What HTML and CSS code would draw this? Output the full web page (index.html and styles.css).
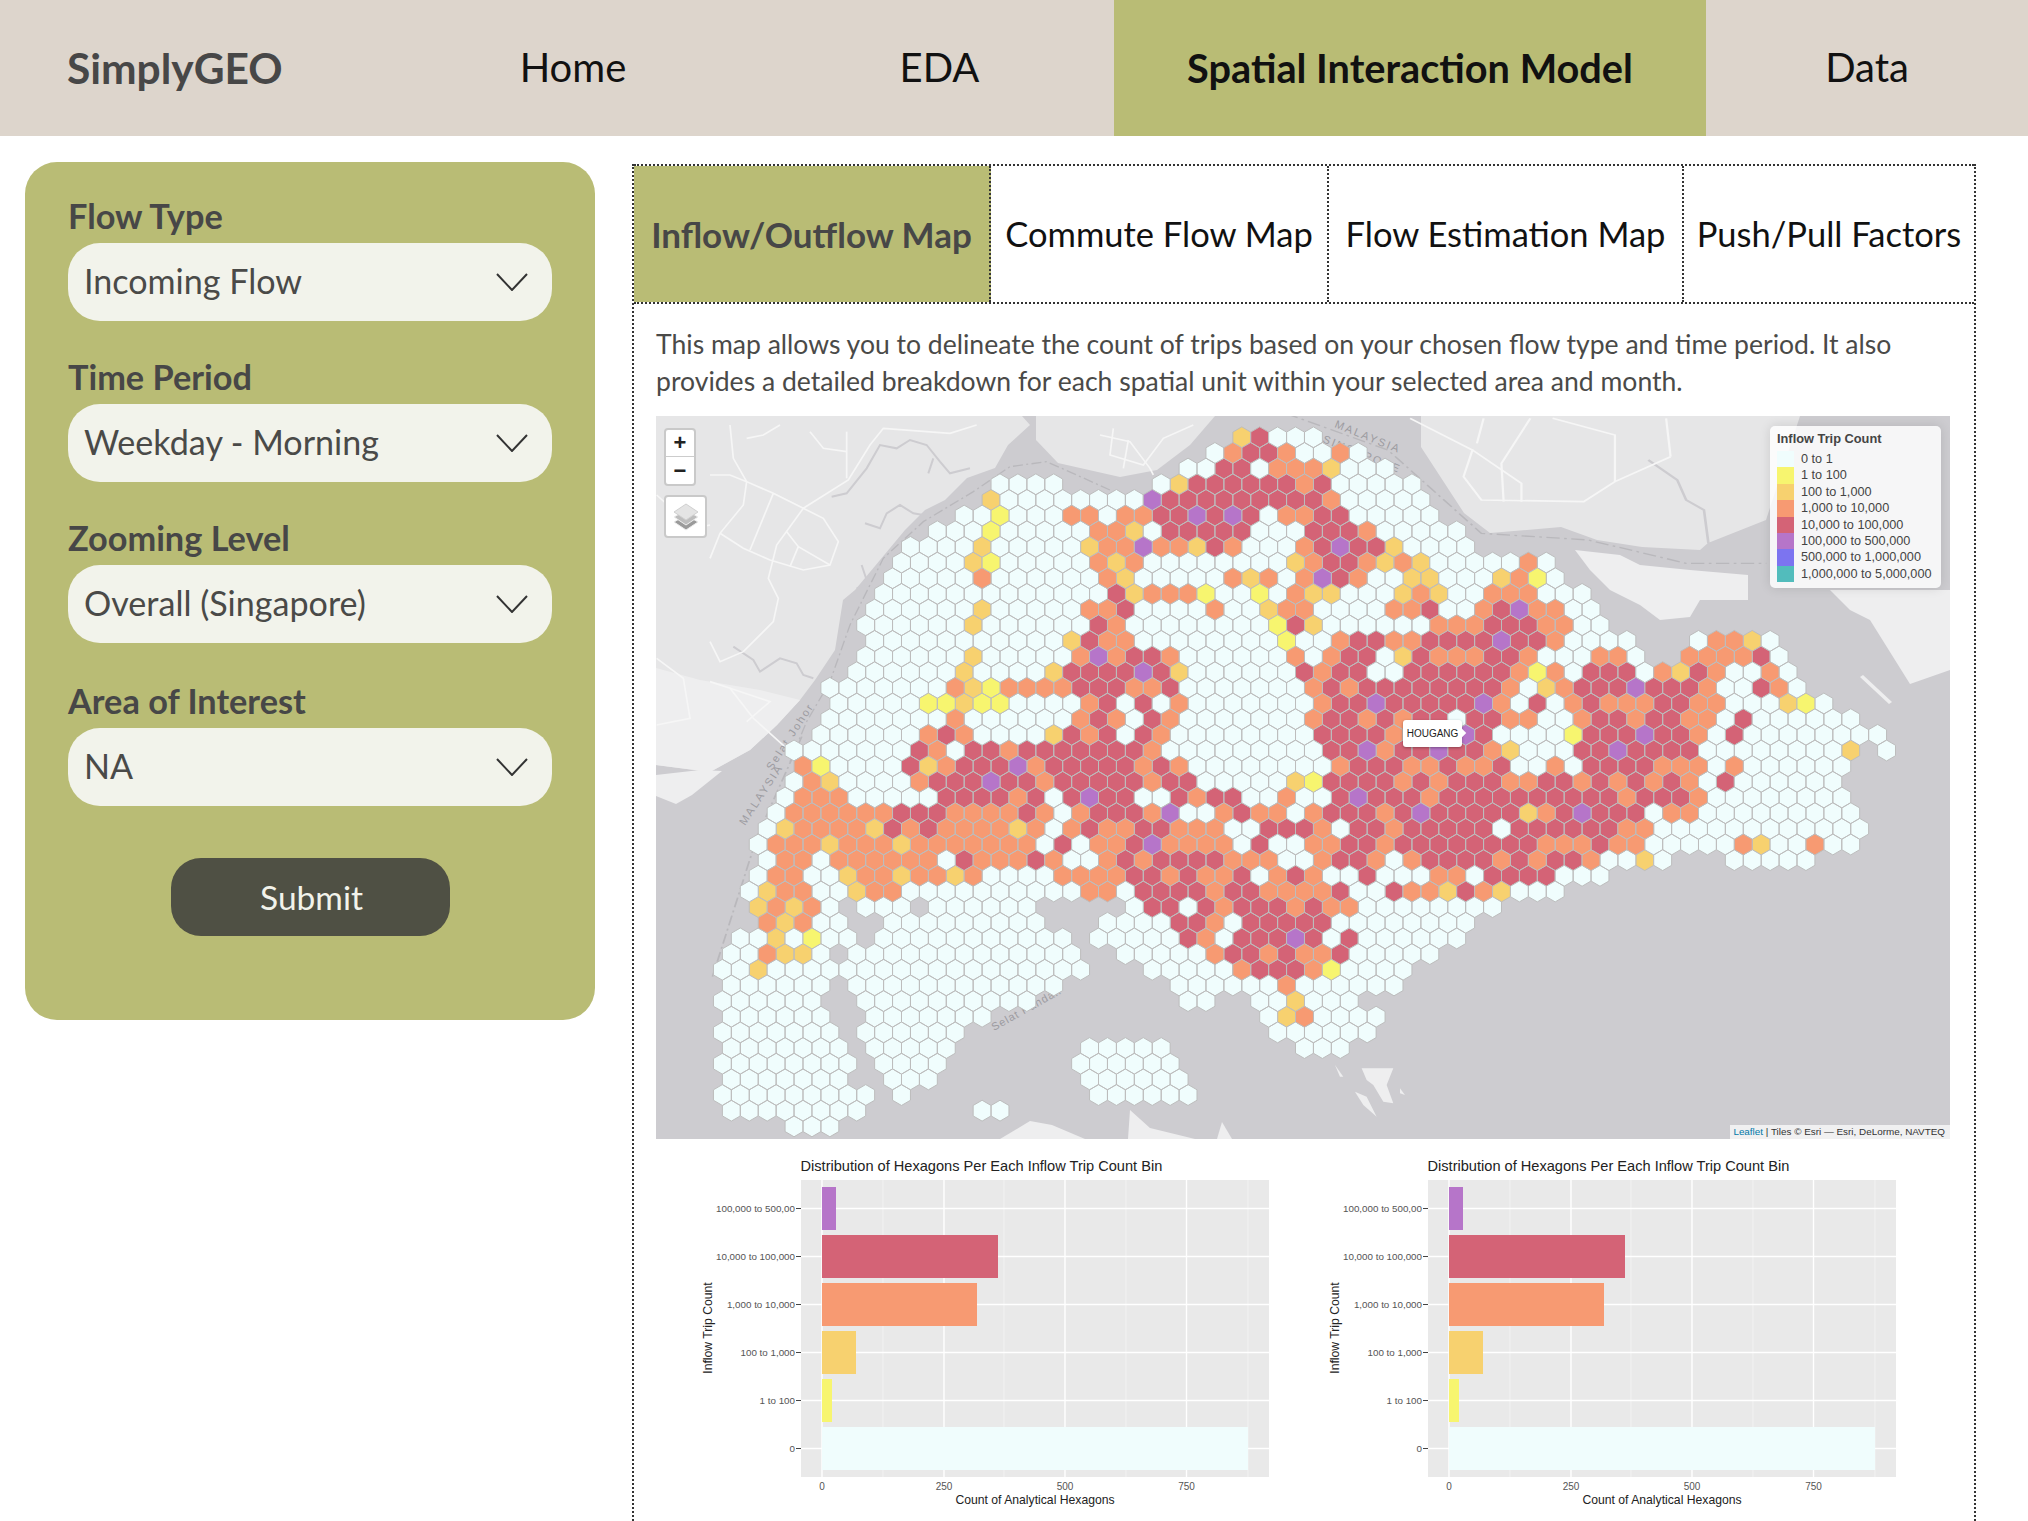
FILE: index.html
```html
<!DOCTYPE html>
<html lang="en">
<head>
<meta charset="utf-8">
<title>SimplyGEO</title>
<link rel="stylesheet" href="styles.css">
</head>
<body>
<div class="page">
  <nav class="nav">
    <div class="brand">SimplyGEO</div>
    <div class="nav-item nav-home">Home</div>
    <div class="nav-item nav-eda">EDA</div>
    <div class="nav-item nav-active">Spatial Interaction Model</div>
    <div class="nav-item nav-data">Data</div>
  </nav>
  <main class="main">
    <aside class="sidebar">
      <div class="field"><div class="field-label">Flow Type</div><div class="select"><span>Incoming Flow</span><svg class="chev" viewBox="0 0 32 18"><polyline points="1,1 16,17 31,1"/></svg></div></div>
      <div class="field"><div class="field-label">Time Period</div><div class="select"><span>Weekday - Morning</span><svg class="chev" viewBox="0 0 32 18"><polyline points="1,1 16,17 31,1"/></svg></div></div>
      <div class="field field-wide"><div class="field-label">Zooming Level</div><div class="select"><span>Overall (Singapore)</span><svg class="chev" viewBox="0 0 32 18"><polyline points="1,1 16,17 31,1"/></svg></div></div>
      <div class="field"><div class="field-label">Area of Interest</div><div class="select"><span>NA</span><svg class="chev" viewBox="0 0 32 18"><polyline points="1,1 16,17 31,1"/></svg></div></div>
      <button class="submit" type="button">Submit</button>
    </aside>
    <section class="panel">
      <div class="tabs">
        <div class="tab tab-1 tab-active">Inflow/Outflow Map</div>
        <div class="tab tab-2">Commute Flow Map</div>
        <div class="tab tab-3">Flow Estimation Map</div>
        <div class="tab tab-4">Push/Pull Factors</div>
      </div>
      <p class="intro">This map allows you to delineate the count of trips based on your chosen flow type and time period. It also provides a detailed breakdown for each spatial unit within your selected area and month.</p>
      <div class="map">
        <svg class="map-svg" id="mapSvg" viewBox="656 416 1294 723" xmlns="http://www.w3.org/2000/svg">
          <rect class="water" x="656" y="416" width="1294" height="723"/>
          <g class="land">
            <polygon points="656,416 1022,416 1030,425 1008,445 995,468 967,478 945,500 925,510 905,530 880,560 855,590 843,600 835,650 815,680 800,700 777,725 750,750 710,772 656,765"/>
            <polygon points="1036,416 1036,440 1058,463 1120,477 1157,470 1190,445 1215,416"/>
            <polygon points="1421,416 1421,447 1464,513 1490,533 1561,527 1597,540 1642,547 1700,550 1708,543 1766,520 1800,416"/>
          </g>
          <g class="land-pale">
            <polygon points="656,668 700,680 760,690 800,700 777,725 750,750 710,772 656,765"/>
            <polygon points="656,775 700,770 722,771 692,795 676,804 656,796"/>
            <polygon points="1575,550 1620,555 1640,565 1690,570 1748,575 1748,600 1700,600 1690,617 1660,620 1640,605 1610,590 1590,570"/>
            <polygon points="1830,590 1950,590 1950,670 1910,684 1895,660 1870,620 1850,610"/>
            <polygon points="1860,677 1863,675 1892,702 1889,704"/>
            <polygon points="1000,1139 1030,1121 1052,1125 1085,1139"/>
            <polygon points="1128,1139 1130,1110 1150,1128 1195,1139"/>
            <polygon points="1217,1139 1222,1122 1232,1139"/>
            <g transform="translate(1100 775) scale(.3333)">
              <polygon points="785,880 880,880 860,930 880,985 850,980 820,930 800,915"/>
              <polygon points="765,950 800,965 830,1025 790,990"/>
              <polygon points="705,870 730,905 720,905"/>
              <polygon points="900,940 915,960 900,955"/>
            </g>
          </g>
          <g class="rivers" transform="translate(710 425) scale(.3333)">
            <polyline points="365,215 410,205 470,130 510,60 560,70 600,45 650,60 690,110 720,145 780,130"/>
            <polyline points="465,295 510,310 530,265 570,240 610,265 640,270"/>
            <polyline points="70,665 130,705 150,740 210,700 260,715 280,750 310,760"/>
            <polyline points="670,100 655,145"/>
            <polyline points="440,490 475,480 455,420"/>
          </g>
          <g class="rivers" transform="translate(1330 400) scale(.4452 .3333)">
            <polyline points="715,180 780,240 800,300 840,330 850,430"/>
          </g>
          <g class="boundary">
            <polyline transform="translate(710 425) scale(.3333)" points="1200,195 1100,150 1010,110 900,125 790,200 640,290 520,400 420,600 360,770 290,890 240,1010"/>
            <polyline transform="translate(650 640) scale(.4464 .3333)" points="340,290 240,590 140,1010"/>
            <polyline transform="translate(1330 400) scale(.4452 .3333)" points="-100,40 130,150 340,400 580,420 800,490 980,490"/>
          </g>
          <g class="roads">
            <polyline transform="translate(710 425) scale(.3333)" points="60,0 70,100 110,170 190,205 280,250 415,165 480,60 520,10 720,25 800,0"/>
            <polyline transform="translate(710 425) scale(.3333)" points="110,170 100,240 30,325 0,400"/>
            <polyline transform="translate(710 425) scale(.3333)" points="30,325 100,370 180,405 280,435 360,420 385,350 340,280 280,250 200,360 175,460 205,520 190,590 100,680 30,710 0,650"/>
            <polyline transform="translate(710 425) scale(.3333)" points="190,205 120,375"/>
            <polyline transform="translate(710 425) scale(.3333)" points="230,320 265,365 360,420"/>
            <polyline transform="translate(710 425) scale(.3333)" points="265,365 240,425"/>
            <polyline transform="translate(710 425) scale(.3333)" points="0,770 60,790 130,880 230,970"/>
            <polyline transform="translate(710 425) scale(.3333)" points="60,790 180,830 110,890"/>
            <polyline transform="translate(710 425) scale(.3333)" points="410,20 410,160"/>
            <polyline transform="translate(710 425) scale(.3333)" points="0,150 60,150 110,170"/>
            <polyline transform="translate(710 425) scale(.3333)" points="110,40 160,30 210,0"/>
            <polyline transform="translate(710 425) scale(.3333)" points="300,20 340,70 410,80"/>
            <polyline transform="translate(710 425) scale(.3333)" points="-160,210 -50,310 0,300"/>
            <polyline transform="translate(710 425) scale(.3333)" points="-160,700 -80,760 -60,880 -160,900"/>
            <polyline transform="translate(1330 400) scale(.4452 .3333)" points="180,55 320,150 300,230 340,300 570,305 640,245 765,170"/>
            <polyline transform="translate(1330 400) scale(.4452 .3333)" points="345,55 330,130"/>
            <polyline transform="translate(1330 400) scale(.4452 .3333)" points="450,55 385,190 390,305"/>
            <polyline transform="translate(1330 400) scale(.4452 .3333)" points="320,150 430,250 430,305"/>
            <polyline transform="translate(1330 400) scale(.4452 .3333)" points="500,55 640,105 640,245"/>
            <polyline transform="translate(1330 400) scale(.4452 .3333)" points="755,55 765,170"/>
            <polyline transform="translate(1100 425) scale(.3333)" points="0,30 90,50 150,130 160,150"/>
            <polyline transform="translate(1100 425) scale(.3333)" points="40,10 30,90 130,120 190,40 280,0"/>
            <polyline transform="translate(1100 425) scale(.3333)" points="85,45 70,130"/>
          </g>
          <text class="geo-label" transform="translate(1334 427) rotate(22)">MALAYSIA</text>
          <text class="geo-label" transform="translate(1322 442) rotate(22)">SINGAPORE</text>
          <text class="geo-label" transform="translate(745 826) rotate(-57)">MALAYSIA</text>
          <text class="geo-label" transform="translate(772 771) rotate(-57)">Selat Johor</text>
          <text class="geo-label geo-plain" transform="translate(994 1031) rotate(-29)">Selat Pandan</text>
          <g id="hexes"></g>
        </svg>
        <div class="zoom-ctl"><div class="zoom-btn zoom-in">+</div><div class="zoom-btn">−</div></div>
        <div class="layers-ctl">
          <svg viewBox="0 0 26 28" class="layers-icon">
            <polygon class="l3" points="13,12 25,19 13,27 1,19"/>
            <polygon class="l2" points="13,7 25,14 13,22 1,14"/>
            <polygon class="l1" points="13,1 25,9 13,17 1,9"/>
          </svg>
        </div>
        <div class="legend">
          <div class="legend-title">Inflow Trip Count</div>
          <div class="legend-row"><i class="sw sw-w"></i>0 to 1</div>
          <div class="legend-row"><i class="sw sw-y"></i>1 to 100</div>
          <div class="legend-row"><i class="sw sw-o"></i>100 to 1,000</div>
          <div class="legend-row"><i class="sw sw-r"></i>1,000 to 10,000</div>
          <div class="legend-row"><i class="sw sw-m"></i>10,000 to 100,000</div>
          <div class="legend-row"><i class="sw sw-p"></i>100,000 to 500,000</div>
          <div class="legend-row"><i class="sw sw-b"></i>500,000 to 1,000,000</div>
          <div class="legend-row"><i class="sw sw-t"></i>1,000,000 to 5,000,000</div>
        </div>
        <div class="tooltip">HOUGANG</div>
        <div class="attrib"><span class="attrib-link">Leaflet</span> | Tiles © Esri — Esri, DeLorme, NAVTEQ</div>
      </div>
      <div class="charts">
        <svg class="chart" viewBox="680 1139 627 382" xmlns="http://www.w3.org/2000/svg">
          <text class="c-title" x="800.5" y="1171">Distribution of Hexagons Per Each Inflow Trip Count Bin</text>
          <rect class="c-bg" x="801" y="1180" width="468" height="297"/>
          <g class="c-minor"><line x1="883" x2="883" y1="1180" y2="1477"/><line x1="1004" x2="1004" y1="1180" y2="1477"/><line x1="1126" x2="1126" y1="1180" y2="1477"/><line x1="1248" x2="1248" y1="1180" y2="1477"/></g>
          <g class="c-major"><line x1="822" x2="822" y1="1180" y2="1477"/><line x1="944" x2="944" y1="1180" y2="1477"/><line x1="1065" x2="1065" y1="1180" y2="1477"/><line x1="1186.5" x2="1186.5" y1="1180" y2="1477"/><line x1="801" x2="1269" y1="1208.5" y2="1208.5"/><line x1="801" x2="1269" y1="1256.5" y2="1256.5"/><line x1="801" x2="1269" y1="1304.5" y2="1304.5"/><line x1="801" x2="1269" y1="1352.5" y2="1352.5"/><line x1="801" x2="1269" y1="1400.5" y2="1400.5"/><line x1="801" x2="1269" y1="1448.5" y2="1448.5"/></g>
          <rect class="hex-p" x="822" y="1187" width="14" height="43"/>
          <rect class="hex-m" x="822" y="1235" width="176" height="43"/>
          <rect class="hex-r" x="822" y="1283" width="155" height="43"/>
          <rect class="hex-o" x="822" y="1331" width="34" height="43"/>
          <rect class="hex-y" x="822" y="1379" width="10" height="43"/>
          <rect class="hex-w" x="822" y="1427" width="426" height="43"/>
          <g class="c-ticks"><line x1="796" x2="801" y1="1208.5" y2="1208.5"/><line x1="796" x2="801" y1="1256.5" y2="1256.5"/><line x1="796" x2="801" y1="1304.5" y2="1304.5"/><line x1="796" x2="801" y1="1352.5" y2="1352.5"/><line x1="796" x2="801" y1="1400.5" y2="1400.5"/><line x1="796" x2="801" y1="1448.5" y2="1448.5"/></g>
          <g class="c-ylabels"><text x="795" y="1212">100,000 to 500,00</text><text x="795" y="1260">10,000 to 100,000</text><text x="795" y="1308">1,000 to 10,000</text><text x="795" y="1356">100 to 1,000</text><text x="795" y="1404">1 to 100</text><text x="795" y="1452">0</text></g>
          <g class="c-xlabels"><text x="822" y="1490">0</text><text x="944" y="1490">250</text><text x="1065" y="1490">500</text><text x="1186.5" y="1490">750</text></g>
          <text class="c-axis" transform="translate(712 1328) rotate(-90)">Inflow Trip Count</text>
          <text class="c-axis" x="1035" y="1504">Count of Analytical Hexagons</text>
        </svg>
        <svg class="chart" viewBox="680 1139 627 382" xmlns="http://www.w3.org/2000/svg">
          <text class="c-title" x="800.5" y="1171">Distribution of Hexagons Per Each Inflow Trip Count Bin</text>
          <rect class="c-bg" x="801" y="1180" width="468" height="297"/>
          <g class="c-minor"><line x1="883" x2="883" y1="1180" y2="1477"/><line x1="1004" x2="1004" y1="1180" y2="1477"/><line x1="1126" x2="1126" y1="1180" y2="1477"/><line x1="1248" x2="1248" y1="1180" y2="1477"/></g>
          <g class="c-major"><line x1="822" x2="822" y1="1180" y2="1477"/><line x1="944" x2="944" y1="1180" y2="1477"/><line x1="1065" x2="1065" y1="1180" y2="1477"/><line x1="1186.5" x2="1186.5" y1="1180" y2="1477"/><line x1="801" x2="1269" y1="1208.5" y2="1208.5"/><line x1="801" x2="1269" y1="1256.5" y2="1256.5"/><line x1="801" x2="1269" y1="1304.5" y2="1304.5"/><line x1="801" x2="1269" y1="1352.5" y2="1352.5"/><line x1="801" x2="1269" y1="1400.5" y2="1400.5"/><line x1="801" x2="1269" y1="1448.5" y2="1448.5"/></g>
          <rect class="hex-p" x="822" y="1187" width="14" height="43"/>
          <rect class="hex-m" x="822" y="1235" width="176" height="43"/>
          <rect class="hex-r" x="822" y="1283" width="155" height="43"/>
          <rect class="hex-o" x="822" y="1331" width="34" height="43"/>
          <rect class="hex-y" x="822" y="1379" width="10" height="43"/>
          <rect class="hex-w" x="822" y="1427" width="426" height="43"/>
          <g class="c-ticks"><line x1="796" x2="801" y1="1208.5" y2="1208.5"/><line x1="796" x2="801" y1="1256.5" y2="1256.5"/><line x1="796" x2="801" y1="1304.5" y2="1304.5"/><line x1="796" x2="801" y1="1352.5" y2="1352.5"/><line x1="796" x2="801" y1="1400.5" y2="1400.5"/><line x1="796" x2="801" y1="1448.5" y2="1448.5"/></g>
          <g class="c-ylabels"><text x="795" y="1212">100,000 to 500,00</text><text x="795" y="1260">10,000 to 100,000</text><text x="795" y="1308">1,000 to 10,000</text><text x="795" y="1356">100 to 1,000</text><text x="795" y="1404">1 to 100</text><text x="795" y="1452">0</text></g>
          <g class="c-xlabels"><text x="822" y="1490">0</text><text x="944" y="1490">250</text><text x="1065" y="1490">500</text><text x="1186.5" y="1490">750</text></g>
          <text class="c-axis" transform="translate(712 1328) rotate(-90)">Inflow Trip Count</text>
          <text class="c-axis" x="1035" y="1504">Count of Analytical Hexagons</text>
        </svg>
      </div>
    </section>
  </main>
</div>
<script src="map.js"></script>
</body>
</html>
```
FILE: styles.css
```css
* { box-sizing: border-box; }
html, body { margin: 0; padding: 0; background: #fff; }
body { font-family: Lato, "Open Sans", sans-serif; color: #4a4a48; }
.page { width: 2028px; height: 1521px; overflow: hidden; }

.nav { display: flex; height: 136px; background: #ddd5cc; align-items: stretch; font-size: 40px; }
.brand { width: 381px; padding: 0 0 2px 67px; display: flex; align-items: center; font-weight: 700; font-size: 42.5px; color: #474747; }
.nav-item { display: flex; align-items: center; justify-content: center; color: #111; padding-bottom: 2px; }
.nav-home { width: 384px; }
.nav-eda { width: 349px; }
.nav-active { width: 592px; background: #b9bc75; font-weight: 700; font-size: 39.7px; }
.nav-data { width: 322px; }

.main { display: flex; padding: 26px 52px 0 25px; gap: 37px; align-items: flex-start; }
.sidebar { width: 570px; background: #b9bc75; border-radius: 32px; padding: 31px 43px 84px; flex: none; display: flex; flex-direction: column; }
.field { margin-bottom: 33px; }
.field-wide { margin-bottom: 35px; }
.field-label { height: 50px; line-height: 45px; font-size: 34.3px; font-weight: 700; color: #474747; }
.select { height: 78px; border-radius: 32px; background: #f2f3eb; display: flex; align-items: center; justify-content: space-between; padding: 0 24px 4px 16px; font-size: 34.1px; color: #4a4a48; }
.chev { width: 32px; height: 18px; fill: none; stroke: #333; stroke-width: 2; margin-top: 4px; }
.submit { align-self: center; margin-top: 19px; width: 279px; height: 78px; border: 0; border-radius: 30px; background: #4f5044; color: #f2f3eb; font: 400 33.5px Lato, sans-serif; margin-left: 1px; padding: 0 0 0 2px; }

.panel { width: 1344px; height: 1400px; margin-top: 2px; border-left: 2px dotted #333; border-right: 2px dotted #333; flex: none; }
.tabs { display: flex; height: 140px; border-top: 2px dotted #333; border-bottom: 2px dotted #333; }
.tab { display: flex; align-items: center; justify-content: center; font-size: 34.5px; color: #111; border-right: 2px dotted #333; white-space: nowrap; padding-bottom: 1px; }
.tab-1 { width: 357px; }
.tab-2 { width: 338px; }
.tab-3 { width: 355px; }
.tab-4 { flex: 1; border-right: 0; }
.tab-active { background: #b9bc75; color: #474747; font-weight: 700; font-size: 35px; }
.intro { margin: 22px 0 16px 22px; width: 1290px; font-size: 26.55px; line-height: 37px; color: #4a4a48; }

.map { position: relative; width: 1294px; height: 723px; margin-left: 22px; overflow: hidden; }
.map-svg { display: block; width: 1294px; height: 723px; }
.water { fill: #cdccd0; }
.land polygon { fill: #e6e6e7; }
.land-pale polygon { fill: #eeeeef; }
.roads polyline { fill: none; stroke: #f6f6f6; stroke-width: 5; }
.rivers polyline { fill: none; stroke: #cdccd0; stroke-width: 6; }
.boundary polyline { fill: none; stroke: #b9b8bc; stroke-width: 4; stroke-dasharray: 30 10 6 10; }
.hex { stroke: #bdbdbd; stroke-width: 1; }
.hex-w { fill: #f0fdfd; }
.hex-y { fill: #f7f56f; }
.hex-o { fill: #f7d16f; }
.hex-r { fill: #f79a72; }
.hex-m { fill: #d46376; }
.hex-p { fill: #b675c9; }
.geo-label { font: 11px "Liberation Sans", sans-serif; fill: #9c9ba0; letter-spacing: 2px; }
.geo-plain { letter-spacing: 1px; }

.zoom-ctl { position: absolute; left: 8px; top: 12px; width: 32px; border: 2px solid #c9c9c9; border-radius: 4px; background: #fff; }
.zoom-btn { height: 27px; display: flex; align-items: center; justify-content: center; font: 700 22px "Liberation Sans", sans-serif; color: #222; }
.zoom-in { border-bottom: 1px solid #ccc; }
.layers-ctl { position: absolute; left: 8px; top: 79px; width: 43px; height: 43px; border: 2px solid #c9c9c9; border-radius: 4px; background: #fff; display: flex; align-items: center; justify-content: center; }
.layers-icon { width: 26px; height: 28px; }
.l1 { fill: #e4e4e4; stroke: #d0d0d0; }
.l2 { fill: #bdbdbd; stroke: #eee; }
.l3 { fill: #9a9a9a; stroke: #eee; }

.legend { position: absolute; left: 1114px; top: 10px; width: 171px; height: 162px; padding: 5px 7px; background: rgba(255,255,255,.82); border-radius: 5px; box-shadow: 0 0 12px rgba(0,0,0,.12); font: 12.7px/16.4px "Liberation Sans", sans-serif; color: #444; white-space: nowrap; }
.legend-title { font-weight: 700; font-size: 12.8px; height: 20px; }
.legend-row { display: flex; align-items: center; height: 16.4px; }
.sw { display: block; width: 17px; height: 16.4px; margin-right: 7px; flex: none; }
.sw-w { background: #f0fdfd; }
.sw-y { background: #f7f56f; }
.sw-o { background: #f7d16f; }
.sw-r { background: #f79a72; }
.sw-m { background: #d46376; }
.sw-p { background: #b675c9; }
.sw-b { background: #7c74f0; }
.sw-t { background: #52bcbc; }

.tooltip { position: absolute; left: 747px; top: 304px; width: 59px; height: 27px; background: #fff; border-radius: 3px; box-shadow: 0 1px 3px rgba(0,0,0,.35); font: 10px/27px "Liberation Sans", sans-serif; color: #222; text-align: center; }
.tooltip::after { content: ""; position: absolute; right: -3px; top: 10px; width: 6px; height: 6px; background: #fff; transform: rotate(45deg); }
.attrib { position: absolute; right: 0; bottom: 0; height: 14px; padding: 0 5px 0 3px; background: rgba(255,255,255,.7); font: 9.9px/14px "Liberation Sans", sans-serif; color: #333; white-space: nowrap; }
.attrib-link { color: #0078a8; }

.charts { display: flex; padding-left: 46px; }
.chart { display: block; width: 627px; height: 382px; flex: none; }
.chart text { font-family: "Liberation Sans", sans-serif; }
.c-title { font-size: 14.6px; fill: #222; }
.c-bg { fill: #e9e9e9; }
.c-major line { stroke: #fff; stroke-width: 1.4; }
.c-minor line { stroke: #f4f4f4; stroke-width: .8; }
.c-ticks line { stroke: #444; stroke-width: 1; }
.c-ylabels text { font-size: 9.8px; fill: #555; text-anchor: end; }
.c-xlabels text { font-size: 10px; fill: #555; text-anchor: middle; }
.c-axis { font-size: 12.2px; fill: #222; text-anchor: middle; }
```
FILE: map.js
```js
// Hexagon grid data: each row is [row index, "startColumn:cells", ...]; spaces inside cells are ignored, one letter per hexagon.
var ROWS = [
[0,"29:omwww"],
[1,"27:wrmmrwwrw"],
[2,"26:wwmmwrrrowww"],
[3,"15:wwww","24:womm mmmm r m wwwww"],
[4,"15:o wwwwwwww p mmmmmmmmm r wwwww"],
[5,"13:ww y www rr w rr mm p m p m w rr mm wwwww"],
[6,"12:www y wwwww rr o w mmmmm www mmm r wwwww"],
[7,"10:wwww o wwwww o rr p rr o m r www r m p mm o wwww"],
[8,"10:wwww o y wwwww r o r wwwwwwww o r mm r o r o wwwww r w"],
[9,"9:wwwww r wwwwww r o wwwww r o r w r p m r ww oo www o r y w"],
[10,"9:wwwwwwwwwwwww m o rrr y ww y w r oo www o r o ww rrr www"],
[11,"8:wwwwww o wwwww rr m wwww r ww o rr wwww rr m ww r m p rr ww"],
[12,"8:wwwwww o wwwwww m r wwwwwwww y m o wwwwww rrr mmm rr ww"],
[13,"8:wwwwwwwwwww o m rr wwwwwwww y ww r mm rr mmmm p mm r wwww","54:wrrow"],
[14,"8:wwwwww o wwwww r p r mm r wwwwww r w r mm w o m rrr mm r www rr w","54:rrrrmw"],
[15,"7:wwwwww o wwww o mmmm p m o wwwwww m r mm ww mmmmmm r y r w mmm w r o m r ww r w"],
[16,"6:wwwwwww r o y rrrr mmm rr m wwwwwww r m r mmmmmmmm r w o r mmm p mmm r ww m r w"],
[17,"6:wwwww yy o yy wwww r m w m w r wwwwwww r mm p mmmmm p r w m w r m rrr mm rr www o y w"],
[18,"6:wwwwwww r wwwwww r m r w m r wwwwwww r mm r m r mm w mm rr ww r mm r mm rr w m wwwwww"],
[19,"5:wwwwww r m r wwww o m r m w m r wwwwwwww mmmm rr mm p m wwww y mmm p mm r w m wwwwwwww"],
[20,"4:wwwwwww m r w mm r mmmmmmm r wwwwwwwww mm p r mm p mm r o www mm p mmmm wwwwwwww o","65:w"],
[21,"4:r y wwww m o r mmm p r mmmmm r m r wwwwwwww r mmm rr m rr m ww r w mmmm rrr w r wwwwww"],
[22,"4:w r o wwww r mmm p mm r mmmmm r mm wwwww o y mmmm r m r mmm rr mm r m r m r m r w m wwwwww"],
[23,"3:w rrr wwwww mmmm r m w m p mm ww m r mm ww r ww m p mmm r mmmmmmmmmm r mmm r wwwwwwww"],
[24,"3:w rrrrrr mmm rrrr m r w r mmm r p ww r m rr w r mmm r m p mmmmm o r m p mmm w rr wwwwwwwww"],
[25,"2:w o rrrr o m r m rrrr o r w r m rr mm rrr ww mmm r w mm r mmmmm w mmmmmm rr wwwwwwwwwwww"],
[26,"2:w rrr o rrr o rrrrrrr w m w rr m p rrrr w m ww rr mm r mmmmmmmm rrr m rr wwwww r o ww r ww"],
[27,"2:w rr w rrrrrr w m rrr m r ww r m r mmmm rrr ww r mm r w r mmmm r m r mm r ww o w","56:wwwww"],
[28,"2:w rr ww o rr o rr o r wwww rrrr mm r m rr m w r m r ww m www rr w mmmm www"],
[29,"1:w o rr ww o rr wwwwwwwwww rr w mmmm r mm rrrr m ww m rr o m r o www"],
[30,"2:o r o r w","8:www","12:wwwwww","23:w mm w m r mmm r m rr wwwwwwww"],
[31,"2:r o r ww","9:wwwwwwwww","21:wwww mm r w mmmmm wwwwwwww"],
[32,"1:ww o w y ww","9:wwwwwwwwwww","21:wwwww m r w mmm p m w m wwwwww"],
[33,"0:ww r oo w","7:wwwwwwwwwwwww","22:wwwww r mm r m rr m wwwww"],
[34,"0:ww o wwwwwwwwwwwwwwwwww","24:wwwww r mmm r y wwww"],
[35,"0:wwwwww","7:wwwwwwwwwwww","25:wwwwww r wwwwww"],
[36,"0:wwwwww","8:wwwwwwwwww","26:ww","30:ww o www"],
[37,"0:wwwwww","8:wwwwwww","30:w o r wwww"],
[38,"0:wwwwwww","8:wwwwww","31:wwwwww"],
[39,"0:wwwwwww","8:wwwww","20:wwwww","32:www"],
[40,"0:wwwwwwww","9:wwww","20:wwwwww"],
[41,"0:wwwwwww","9:www","20:wwwwww"],
[42,"0:wwwwwwwww","10:w","21:wwwwww"],
[43,"0:wwwwwwww","14:ww"],
[44,"4:www"]
];

(function () {
  var X0 = 722.4, DX = 17.91, Y0 = 437.3, DY = 15.66, HW = DX / 2, HH = DY * 2 / 3;
  var paths = {};
  ROWS.forEach(function (row) {
    var k = row[0];
    row.slice(1).forEach(function (seg) {
      var i = seg.indexOf(":");
      var n = parseInt(seg.slice(0, i), 10);
      seg.slice(i + 1).replace(/ /g, "").split("").forEach(function (c) {
        var x = X0 + DX * n + (k % 2 ? HW : 0), y = Y0 + DY * k;
        paths[c] = (paths[c] || "") + "M" + x.toFixed(2) + " " + (y - HH).toFixed(2) +
          "l" + HW + " " + HH / 2 + "v" + HH + "l-" + HW + " " + HH / 2 + "l-" + HW + " -" + HH / 2 + "v-" + HH + "z";
        n++;
      });
    });
  });
  var g = document.getElementById("hexes");
  Object.keys(paths).forEach(function (c) {
    var p = document.createElementNS("http://www.w3.org/2000/svg", "path");
    p.setAttribute("d", paths[c]);
    p.setAttribute("class", "hex hex-" + c);
    g.appendChild(p);
  });
})();
```
